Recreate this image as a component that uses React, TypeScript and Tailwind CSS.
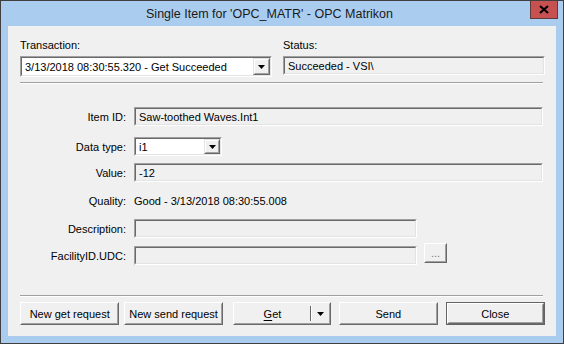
import React from "react"

const Sunken = ({ className = "", bg = "bg-[#f0f0f0]", children }: { className?: string; bg?: string; children?: React.ReactNode }) => (
  <div className={`border border-t-[#a0a0a0] border-l-[#a0a0a0] border-b-white border-r-white ${className}`}>
    <div className={`h-full border border-t-[#696969] border-l-[#696969] border-b-[#e3e3e3] border-r-[#e3e3e3] ${bg} flex items-center`}>
      {children}
    </div>
  </div>
)

const Arrow = () => (
  <svg width="7" height="4" viewBox="0 0 7 4">
    <path d="M0 0h7L3.5 4z" fill="#000" />
  </svg>
)

const DropBtn = ({ className = "" }: { className?: string }) => (
  <div className={`border border-t-[#e3e3e3] border-l-[#e3e3e3] border-b-[#696969] border-r-[#696969] ${className}`}>
    <div className="h-full border border-t-white border-l-white border-b-[#a0a0a0] border-r-[#a0a0a0] bg-[#f0f0f0] flex items-center justify-center">
      <Arrow />
    </div>
  </div>
)

const Button = ({ className = "", children, isDefault = false }: { className?: string; children?: React.ReactNode; isDefault?: boolean }) => (
  <div className={`h-[23px] ${isDefault ? "border border-[#646464]" : ""} ${className}`}>
    <div className="h-full border border-t-white border-l-white border-b-[#696969] border-r-[#696969]">
      <div className="h-full border border-t-[#f0f0f0] border-l-[#f0f0f0] border-b-[#a0a0a0] border-r-[#a0a0a0] bg-[#f0f0f0] flex items-center justify-center">
        {children}
      </div>
    </div>
  </div>
)

const Separator = ({ className = "" }: { className?: string }) => (
  <div className={`border-t border-t-[#a0a0a0] border-b border-b-white ${className}`} />
)

const Label = ({ children }: { children: React.ReactNode }) => (
  <div className="w-[106px] shrink-0 text-right whitespace-nowrap">{children}</div>
)

export default function App() {
  return (
    <div className="w-[564px] h-[344px] bg-[#aacdef] border border-[#404040] flex flex-col font-['Liberation_Sans',Arial,sans-serif] text-[11px] text-black leading-[14px]">
      {/* title bar */}
      <div className="h-[25px] flex shrink-0">
        <div className="flex-1 flex items-center justify-center pl-[8px] text-[12.5px] text-[#1a1a1a]">
          Single Item for 'OPC_MATR' - OPC Matrikon
        </div>
        <div className="self-start mr-[5px] w-[28px] h-[18px] bg-[#c75050] border border-[#5e3a3a] border-t-0 flex items-center justify-center">
          <svg width="10" height="9" viewBox="0 0 10 9">
            <path d="M1 1l8 7M9 1L1 8" stroke="#000" strokeWidth="2.2" />
          </svg>
        </div>
      </div>

      {/* client area */}
      <div className="mx-[7px] h-[310px] bg-[#f0f0f0] flex flex-col pl-[12px] pr-[11px] pt-[12px]">
        <div className="flex">
          <div className="w-[252px] flex flex-col">
            <div>Transaction:</div>
            <Sunken className="h-[21px] mt-[4px]" bg="bg-white">
              <span className="pl-[3px] flex-1 whitespace-nowrap">3/13/2018 08:30:55.320 - Get Succeeded</span>
              <DropBtn className="w-[17px] h-full" />
            </Sunken>
          </div>
          <div className="ml-[11px] flex-1 flex flex-col">
            <div>Status:</div>
            <Sunken className="h-[19px] mt-[4px]">
              <span className="pl-[3px]">Succeeded - VSI\</span>
            </Sunken>
          </div>
        </div>

        <Separator className="mt-[5px] mr-[2px]" />

        <div className="flex items-center mt-[23px] h-[19px]">
          <Label>Item ID:</Label>
          <Sunken className="ml-[8px] h-[19px] w-[409px]">
            <span className="pl-[3px]">Saw-toothed Waves.Int1</span>
          </Sunken>
        </div>

        <div className="flex items-center mt-[11px] h-[19px]">
          <Label>Data type:</Label>
          <Sunken className="ml-[8px] h-[19px] w-[88px]" bg="bg-white">
            <span className="pl-[3px] flex-1">i1</span>
            <DropBtn className="w-[16px] h-full" />
          </Sunken>
        </div>

        <div className="flex items-center mt-[7px] h-[19px]">
          <Label>Value:</Label>
          <Sunken className="ml-[8px] h-[19px] w-[409px]">
            <span className="pl-[3px]">-12</span>
          </Sunken>
        </div>

        <div className="flex items-center mt-[9px] h-[19px]">
          <Label>Quality:</Label>
          <div className="ml-[8px]">Good - 3/13/2018 08:30:55.008</div>
        </div>

        <div className="flex items-center mt-[9px] h-[19px]">
          <Label>Description:</Label>
          <Sunken className="ml-[8px] h-[19px] w-[283px]" />
        </div>

        <div className="flex items-center mt-[8px] h-[19px]">
          <Label>FacilityID.UDC:</Label>
          <Sunken className="ml-[8px] h-[19px] w-[283px]" />
          <Button className="ml-[7px] w-[23px] !h-[20px] -mt-[5px]">
            <span className="text-[#7a7a7a] leading-[8px] pb-[1px]">...</span>
          </Button>
        </div>

        <Separator className="mt-[30px] mr-[2px]" />

        <div className="flex mt-[5px]">
          <Button className="w-[100px]">New get request</Button>
          <Button className="ml-[5px] w-[99px]">New send request</Button>
          <div className="ml-[10px] w-[99px] h-[23px] border border-t-white border-l-white border-b-[#696969] border-r-[#696969]">
            <div className="h-full border border-t-[#f0f0f0] border-l-[#f0f0f0] border-b-[#a0a0a0] border-r-[#a0a0a0] bg-[#f0f0f0] flex items-center">
              <div className="flex-1 text-center">
                <span className="underline underline-offset-2">G</span>et
              </div>
              <div className="w-[1px] h-[15px] bg-[#696969]" />
              <div className="w-[1px] h-[15px] bg-white" />
              <div className="w-[17px] flex justify-center">
                <Arrow />
              </div>
            </div>
          </div>
          <Button className="ml-[8px] w-[99px]">Send</Button>
          <Button className="ml-[8px] w-[100px]" isDefault>Close</Button>
        </div>
      </div>
    </div>
  )
}
